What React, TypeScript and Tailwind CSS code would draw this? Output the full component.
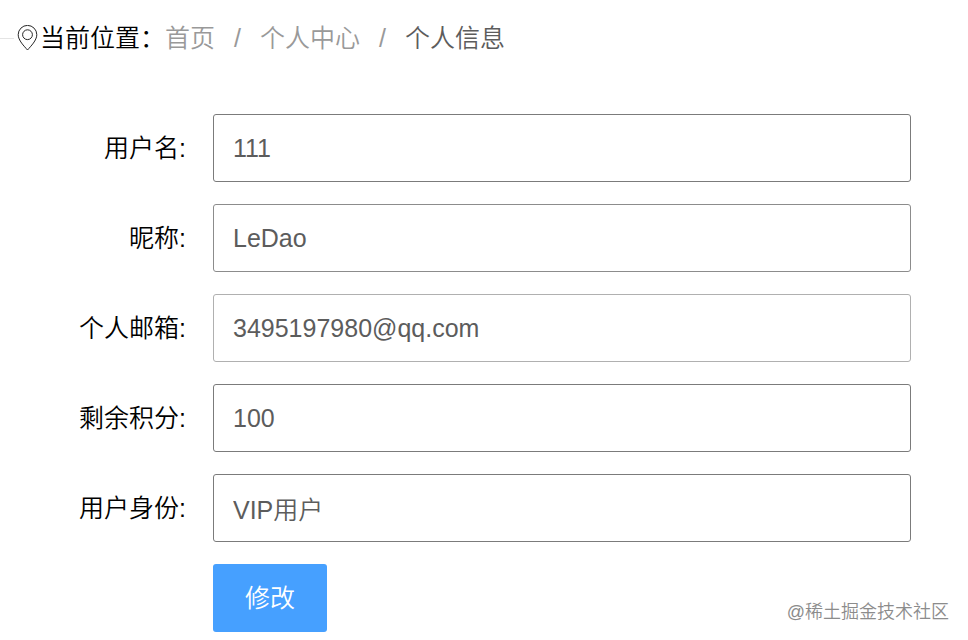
import { useState } from 'react';
import type { FormEvent } from 'react';

const FIELDS = [
  { key: 'userName', label: '用户名', border: 'border-[#7b7b7b]' },
  { key: 'nickName', label: '昵称', border: 'border-[#8c8c8c]' },
  { key: 'email', label: '个人邮箱', border: 'border-[#b0b0b0]' },
  { key: 'points', label: '剩余积分', border: 'border-[#7b7b7b]' },
  { key: 'role', label: '用户身份', border: 'border-[#7b7b7b]' },
];

function LocationIcon() {
  return (
    <svg className="ml-[3px] h-[26px] w-[23px] shrink-0" viewBox="0 0 23 26" fill="none" stroke="#262626" strokeWidth="1" aria-hidden="true">
      <path d="M10.5 25C7.2 21.2 1.2 15.4 1.2 9.7a9.3 9.3 0 0 1 18.6 0c0 5.7-6 11.5-9.3 15.3Z" />
      <circle cx="10.5" cy="9.7" r="4.9" />
    </svg>
  );
}

export default function App() {
  const [form, setForm] = useState<Record<string, string>>({
    userName: '111',
    nickName: 'LeDao',
    email: '3495197980@qq.com',
    points: '100',
    role: 'VIP用户',
  });

  const handleSubmit = (e: FormEvent) => {
    e.preventDefault();
  };

  return (
    <div className="relative min-h-screen bg-white font-['Liberation_Sans','Noto_Sans_CJK_SC',sans-serif] text-[25px] leading-9 font-[350] text-black">
      {/* Breadcrumb */}
      <header className="flex items-center pt-5">
        <div className="h-px w-[14px] bg-[#e4e4e4]" />
        <LocationIcon />
        <span>当前位置：</span>
        <nav className="flex text-[#999999]" aria-label="breadcrumb">
          <a href="#home">首页</a>
          <span className="mx-[19px]">/</span>
          <a href="#center">个人中心</a>
          <span className="mx-[19px]">/</span>
          <span className="text-[#5c5c5c]" aria-current="page">个人信息</span>
        </nav>
      </header>

      {/* Form */}
      <form onSubmit={handleSubmit} className="mt-[58px] mr-[57px] flex flex-col gap-[22px]">
        {FIELDS.map(f => (
          <div key={f.key} className="flex items-center">
            <label htmlFor={f.key} className="w-[213px] shrink-0 pr-[27px] text-right">{f.label}:</label>
            <input
              id={f.key}
              type="text"
              value={form[f.key]}
              onChange={e => setForm(prev => ({ ...prev, [f.key]: e.target.value }))}
              className={`h-[68px] min-w-0 flex-1 rounded-[3px] border bg-white px-[19px] text-[#5c5c5c] outline-none focus:border-[#46a0ff] ${f.border}`}
            />
          </div>
        ))}
        <button type="submit" className="ml-[213px] h-[68px] self-start rounded-[3px] bg-[#46a0ff] px-8 text-white">
          修改
        </button>
      </form>

      {/* Watermark */}
      <span className="absolute right-[19px] bottom-4 text-lg leading-6 text-[#8c8c8c]">@稀土掘金技术社区</span>
    </div>
  );
}
